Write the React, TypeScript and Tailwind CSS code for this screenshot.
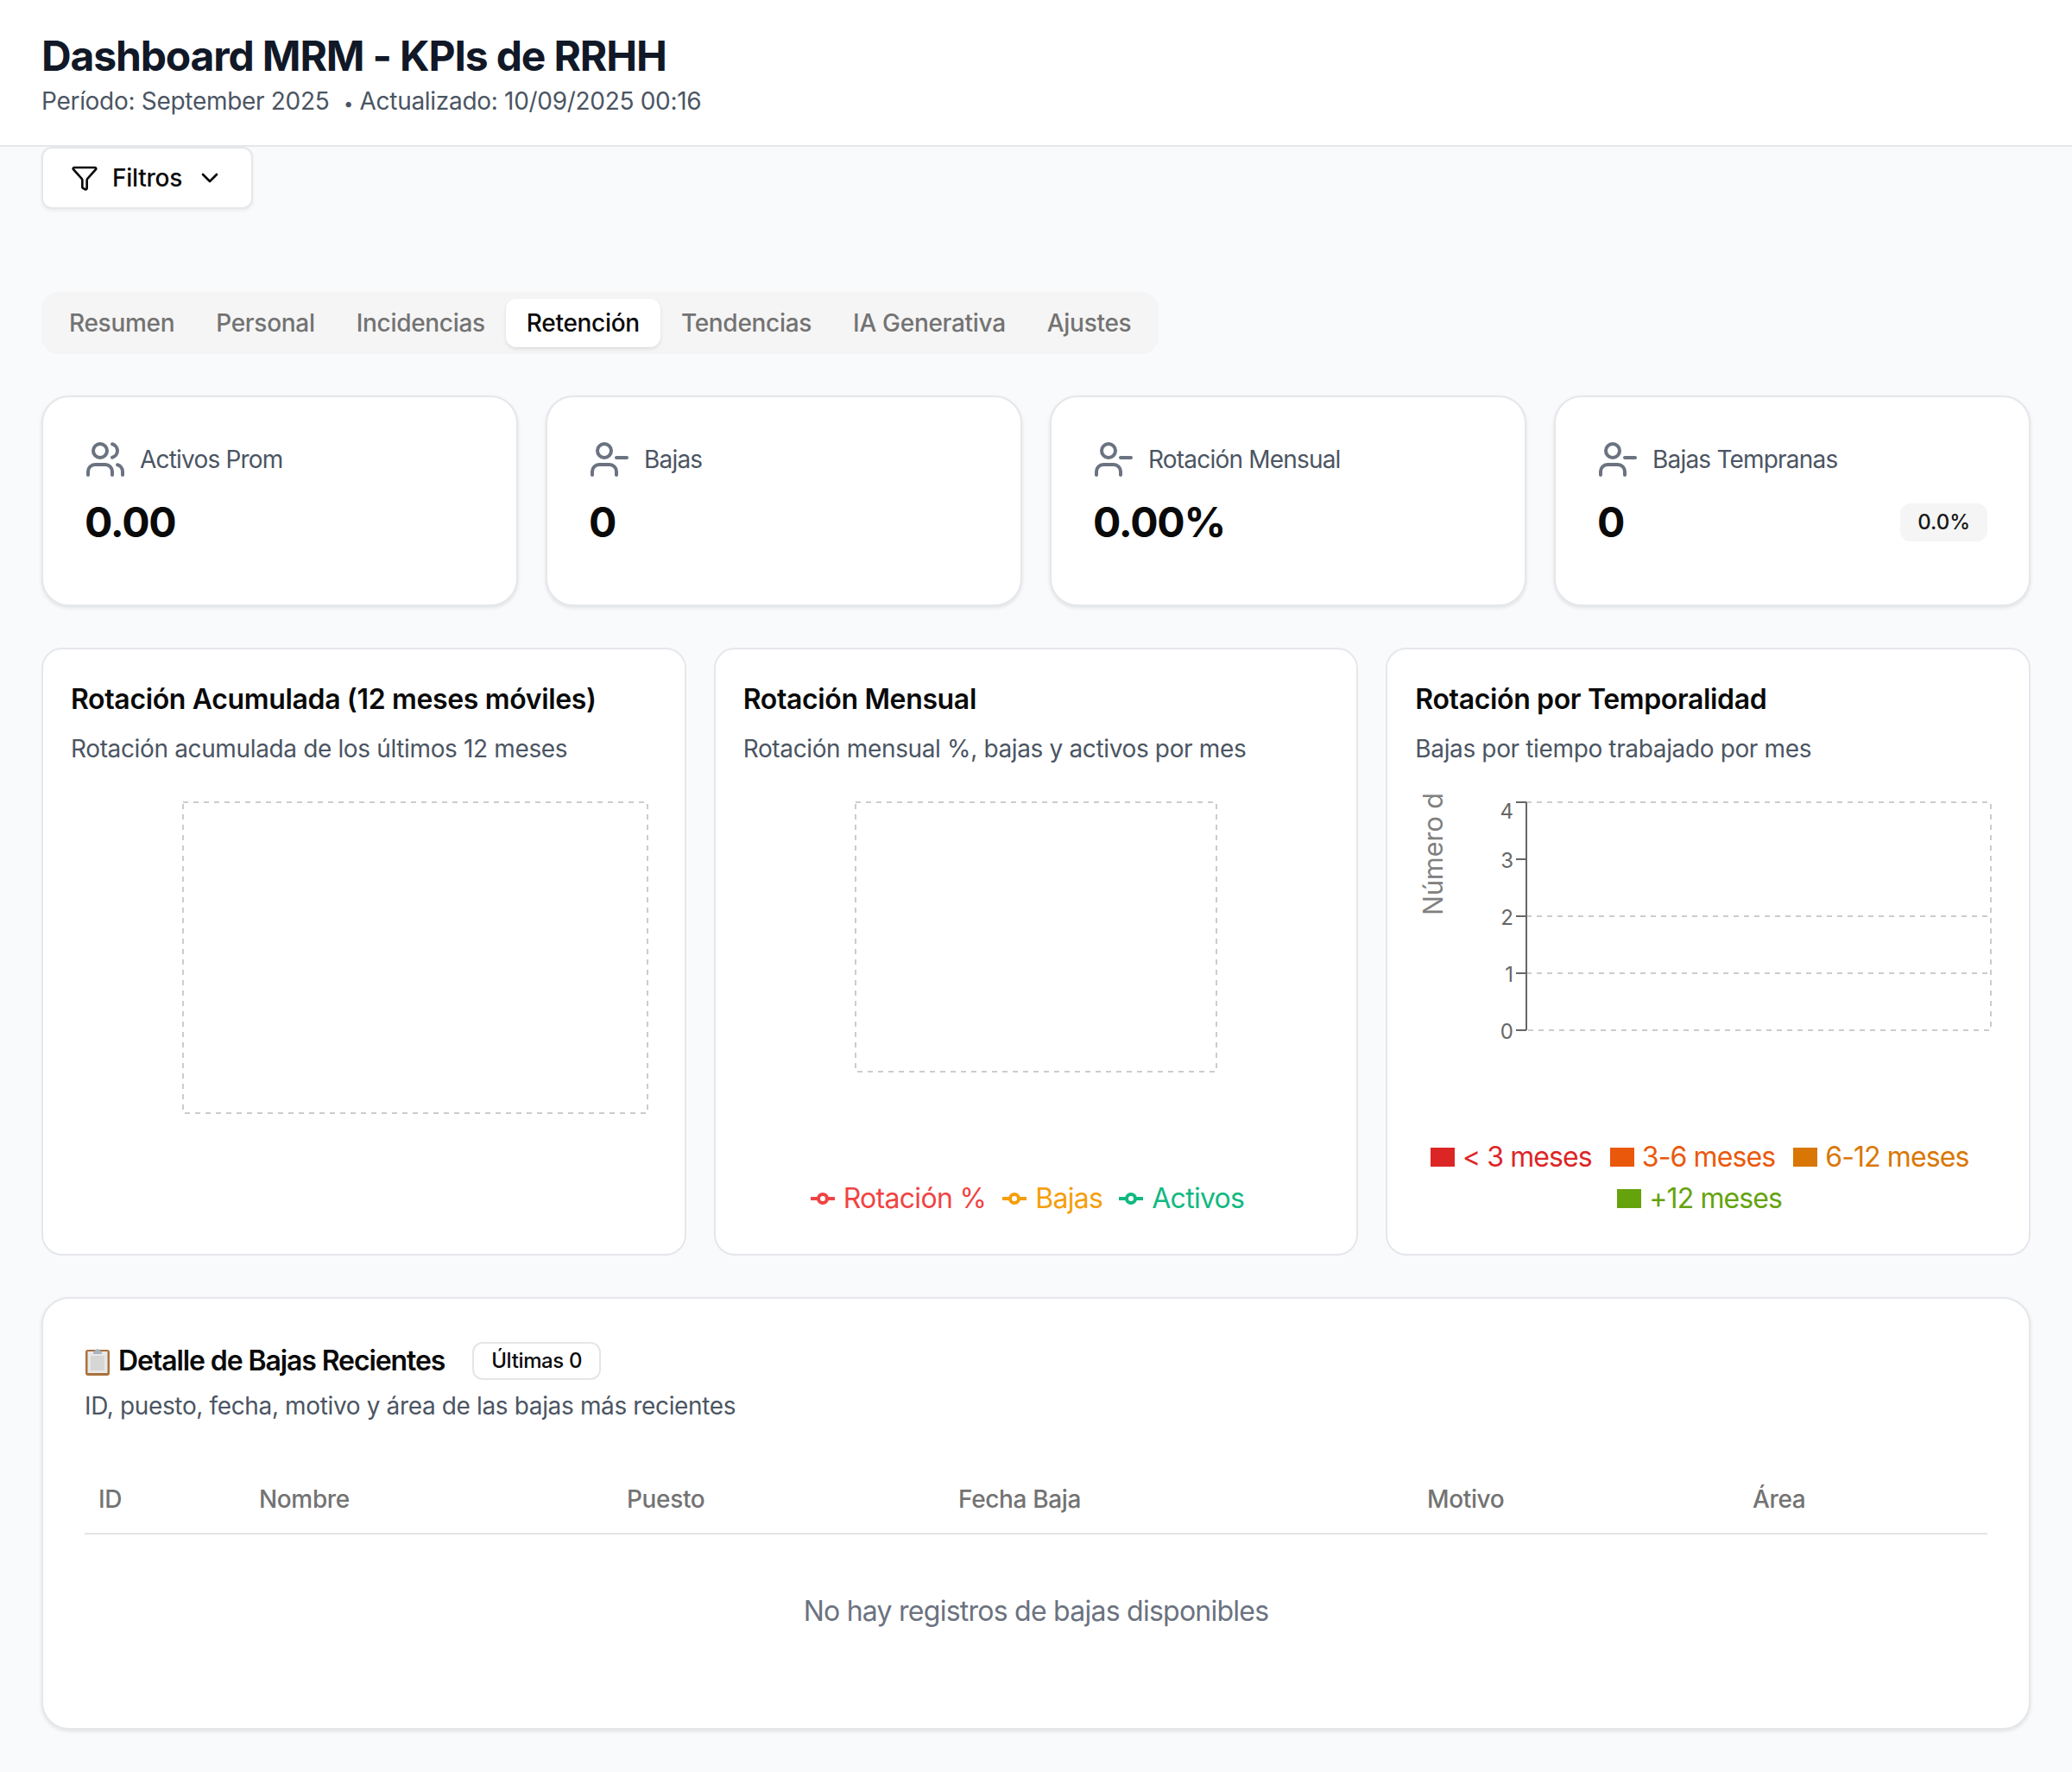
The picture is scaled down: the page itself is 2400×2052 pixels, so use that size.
import React from 'react';
import { ChevronDown, Funnel, UserMinus, Users } from 'lucide-react';

const tabs = ['Resumen', 'Personal', 'Incidencias', 'Retención', 'Tendencias', 'IA Generativa', 'Ajustes'];

const stats = [
  { label: 'Activos Prom', value: '0.00', icon: Users },
  { label: 'Bajas', value: '0', icon: UserMinus },
  { label: 'Rotación Mensual', value: '0.00%', icon: UserMinus },
  { label: 'Bajas Tempranas', value: '0', icon: UserMinus, badge: '0.0%' },
];

const columns = [
  { label: 'ID', width: 'w-[186px]' },
  { label: 'Nombre', width: 'w-[426px]' },
  { label: 'Puesto', width: 'w-[384px]' },
  { label: 'Fecha Baja', width: 'w-[543px]' },
  { label: 'Motivo', width: 'w-[377px]' },
  { label: 'Área', width: 'w-[288px]' },
];

const ChartCard: React.FC<{ title: string; subtitle: string; children: React.ReactNode }> = ({ title, subtitle, children }) => (
  <div className="flex h-[704px] flex-col rounded-[24px] border-2 border-[#e5e7eb] bg-white px-8 pt-[34px]">
    <h3 className="text-[32px] leading-[48px] font-semibold tracking-[-0.35px] text-[#0a0a0a]">{title}</h3>
    <p className="mt-[13px] text-[28px] leading-[40px] tracking-[-0.36px] text-[#4b5563]">{subtitle}</p>
    <div className="mt-[32px] flex flex-1 flex-col pb-[40px]">{children}</div>
  </div>
);

const LineKey: React.FC<{ color: string; label: string; textClass: string }> = ({ color, label, textClass }) => (
  <span className={`flex items-center gap-[10px] text-[32px] leading-[48px] tracking-[-0.7px] ${textClass}`}>
    <svg width="28" height="28" viewBox="0 0 28 28" fill="none">
      <path d="M0 14h28" stroke={color} strokeWidth="4" />
      <circle cx="14" cy="14" r="5" fill="#fff" stroke={color} strokeWidth="4" />
    </svg>
    {label}
  </span>
);

const SquareKey: React.FC<{ label: string; boxClass: string; textClass: string }> = ({ label, boxClass, textClass }) => (
  <span className={`flex items-center gap-[9px] text-[32px] leading-[48px] tracking-[-0.9px] ${textClass}`}>
    <span className={`h-[22px] w-[28px] ${boxClass}`} />
    {label}
  </span>
);

const ClipboardEmoji = () => (
  <svg width="30" height="34" viewBox="0 0 30 34" className="shrink-0">
    <rect x="1" y="4" width="28" height="30" rx="3" fill="#a9713c" />
    <rect x="3.5" y="6" width="23" height="25" fill="#e8e8e8" />
    <rect x="7" y="11" width="16" height="17" fill="#d6d6d6" />
    <path d="M10 7l3-3a3 3 0 0 1 4 0l3 3v2H10z" fill="#aab4bd" />
  </svg>
);

export default function App() {
  return (
    <div className="min-h-[2052px] bg-[#f9fafb] [font-family:Inter,sans-serif] [font-variation-settings:'opsz'_32]">
      <header className="h-[170px] border-b-2 border-[#e5e7eb] bg-white px-12 pt-[33px]">
        <h1 className="text-[48px] leading-[64px] font-bold tracking-[-1.15px] text-[#111827]">Dashboard MRM - KPIs de RRHH</h1>
        <p className="text-[28px] leading-[40px] tracking-[-0.3px] text-[#4b5563]">
          Período: September 2025 <span className="ml-[9px] text-[20px]">•</span> Actualizado: 10/09/2025 00:16
        </p>
      </header>

      <main className="px-12 pb-12">
        <button
          type="button"
          className="flex h-[72px] items-center gap-4 rounded-[12px] border-2 border-[#e5e7eb] bg-white px-8 text-[28px] font-medium tracking-[-0.25px] text-[#0a0a0a] shadow-[0_2px_4px_rgba(0,0,0,0.06)]"
        >
          <Funnel size={32} strokeWidth={2} />
          Filtros
          <ChevronDown size={32} strokeWidth={2} />
        </button>

        <div className="mt-24 inline-flex h-[72px] items-center rounded-[20px] bg-[#f5f5f5] p-2">
          {tabs.map((tab) => (
            <div
              key={tab}
              className={`flex h-14 items-center rounded-[12px] px-6 text-[28px] font-medium tracking-[-0.3px] ${
                tab === 'Retención' ? 'bg-white text-[#0a0a0a] shadow-[0_2px_4px_rgba(0,0,0,0.1)]' : 'text-[#737373]'
              }`}
            >
              {tab}
            </div>
          ))}
        </div>

        <div className="mt-12 grid grid-cols-4 gap-8">
          {stats.map((stat) => {
            const Icon = stat.icon;
            return (
              <div key={stat.label} className="h-[244px] rounded-[32px] border-2 border-[#e5e7eb] bg-white p-12 shadow-[0_2px_4px_rgba(0,0,0,0.1)]">
                <div className="flex items-center gap-4">
                  <Icon size={48} strokeWidth={2} className="text-[#6b7280]" />
                  <span className="text-[28px] leading-[40px] font-normal tracking-[-0.8px] text-[#4b5563]">{stat.label}</span>
                </div>
                <div className="mt-[17px] flex items-center justify-between">
                  <span className="text-[48px] leading-[64px] font-bold tracking-[-1.2px] text-[#0a0a0a]">{stat.value}</span>
                  {stat.badge && (
                    <span className="flex h-11 items-center rounded-[12px] bg-[#f5f5f5] px-[20px] text-[24px] font-medium text-[#171717]">{stat.badge}</span>
                  )}
                </div>
              </div>
            );
          })}
        </div>

        <div className="mt-12 grid grid-cols-3 gap-8">
          <ChartCard title="Rotación Acumulada (12 meses móviles)" subtitle="Rotación acumulada de los últimos 12 meses">
            <svg width="679" height="380" fill="none">
              <rect x="130" y="10" width="538" height="360" stroke="#ccc" strokeWidth="2" strokeDasharray="6 6" />
            </svg>
          </ChartCard>

          <ChartCard title="Rotación Mensual" subtitle="Rotación mensual %, bajas y activos por mes">
            <svg width="679" height="380" fill="none">
              <rect x="130" y="10" width="418" height="312" stroke="#ccc" strokeWidth="2" strokeDasharray="6 6" />
            </svg>
            <div className="mt-auto flex justify-center gap-x-[19px] pr-5">
              <LineKey color="#ef4444" label="Rotación %" textClass="text-[#ef4444]" />
              <LineKey color="#f59e0b" label="Bajas" textClass="text-[#f59e0b]" />
              <LineKey color="#10b981" label="Activos" textClass="text-[#10b981]" />
            </div>
          </ChartCard>

          <ChartCard title="Rotación por Temporalidad" subtitle="Bajas por tiempo trabajado por mes">
            <svg width="679" height="300" fill="none">
              <path d="M129 10H667V274H129M129 142H667M129 208H667" stroke="#ccc" strokeWidth="2" strokeDasharray="6 6" />
              <path d="M129 10V274M117 10H129M117 76H129M117 142H129M117 208H129M117 274H129" stroke="#666" strokeWidth="2" />
              <g fill="#666" fontSize="24" textAnchor="end">
                <text x="114" y="29">4</text>
                <text x="114" y="86">3</text>
                <text x="114" y="152">2</text>
                <text x="114" y="218">1</text>
                <text x="114" y="284">0</text>
              </g>
              <text x="0" y="0" transform="translate(32 141) rotate(-90)" fill="#808080" fontSize="30.5">Número d</text>
            </svg>
            <div className="mt-auto flex flex-wrap justify-center gap-x-[21px] pr-5">
              <SquareKey label="< 3 meses" boxClass="bg-[#dc2626]" textClass="text-[#dc2626]" />
              <SquareKey label="3-6 meses" boxClass="bg-[#ea580c]" textClass="text-[#ea580c]" />
              <SquareKey label="6-12 meses" boxClass="bg-[#d97706]" textClass="text-[#d97706]" />
              <SquareKey label="+12 meses" boxClass="bg-[#65a30d]" textClass="text-[#65a30d]" />
            </div>
          </ChartCard>
        </div>

        <section className="mt-12 rounded-[32px] border-2 border-[#e5e7eb] bg-white p-12 shadow-[0_2px_4px_rgba(0,0,0,0.1)]">
          <div className="flex h-12 items-center">
            <ClipboardEmoji />
            <h2 className="ml-[9px] text-[32px] leading-[48px] font-semibold tracking-[-1.1px] text-[#0a0a0a]">Detalle de Bajas Recientes</h2>
            <span className="ml-8 flex h-11 items-center rounded-[12px] border-2 border-[#e5e5e5] px-[20px] text-[24px] font-medium tracking-[-0.36px] text-[#0a0a0a]">Últimas 0</span>
          </div>
          <p className="mt-2 text-[28px] leading-[40px] tracking-[-0.36px] text-[#4b5563]">ID, puesto, fecha, motivo y área de las bajas más recientes</p>

          <table className="mt-12 w-full table-fixed">
            <thead>
              <tr className="h-20 border-b-2 border-[#e5e5e5]">
                {columns.map((col) => (
                  <th key={col.label} className={`${col.width} px-4 text-left text-[28px] font-medium tracking-[-0.36px] text-[#737373]`}>{col.label}</th>
                ))}
              </tr>
            </thead>
            <tbody>
              <tr>
                <td colSpan={6} className="pt-[65px] pb-[63px] text-center text-[32px] leading-[48px] tracking-[-0.75px] text-[#6b7280]">No hay registros de bajas disponibles</td>
              </tr>
            </tbody>
          </table>
        </section>
      </main>
    </div>
  );
}
